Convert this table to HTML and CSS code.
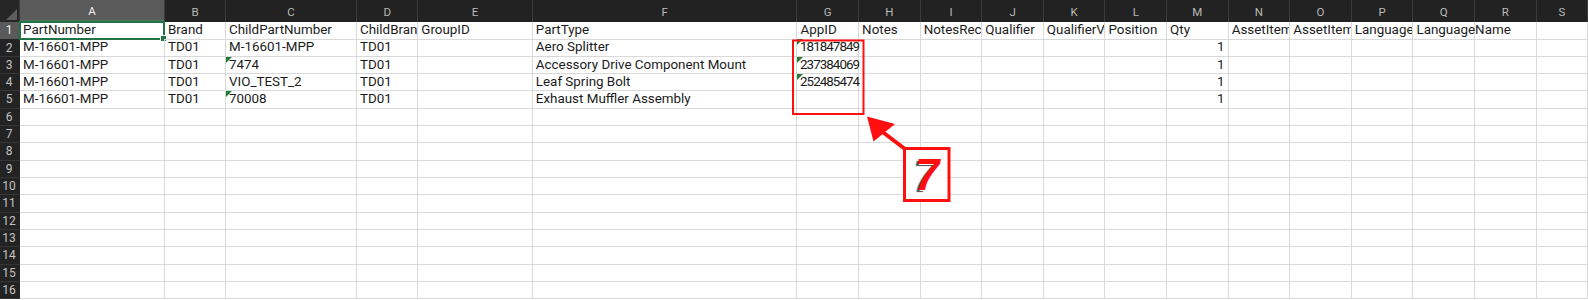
FILE: index.html
```html
<!DOCTYPE html>
<html>
<head>
<meta charset="utf-8">
<link rel="stylesheet" href="styles.css">
</head>
<body>
<div class="sheet">
  <div class="row head">
    <div class="corner"></div>
    <div class="ch active">A</div><div class="ch">B</div><div class="ch">C</div><div class="ch">D</div><div class="ch">E</div><div class="ch">F</div><div class="ch">G</div><div class="ch">H</div><div class="ch">I</div><div class="ch">J</div><div class="ch">K</div><div class="ch">L</div><div class="ch">M</div><div class="ch">N</div><div class="ch">O</div><div class="ch">P</div><div class="ch">Q</div><div class="ch">R</div><div class="ch">S</div>
  </div>
  <div class="row">
    <div class="rh active">1</div>
    <div class="c sel">PartNumber<span class="selbox"></span></div><div class="c">Brand</div><div class="c">ChildPartNumber</div><div class="c">ChildBrand</div><div class="c">GroupID</div><div class="c">PartType</div><div class="c">AppID</div><div class="c">Notes</div><div class="c">NotesRecordID</div><div class="c">Qualifier</div><div class="c">QualifierValue</div><div class="c">Position</div><div class="c">Qty</div><div class="c">AssetItemOrder</div><div class="c">AssetItemRef</div><div class="c">LanguageCode</div><div class="c spill">LanguageName</div><div class="c"></div><div class="c"></div>
  </div>
  <div class="row">
    <div class="rh">2</div>
    <div class="c">M-16601-MPP</div><div class="c">TD01</div><div class="c">M-16601-MPP</div><div class="c">TD01</div><div class="c"></div><div class="c">Aero Splitter</div><div class="c tri digits">181847849</div><div class="c"></div><div class="c"></div><div class="c"></div><div class="c"></div><div class="c"></div><div class="c num">1</div><div class="c"></div><div class="c"></div><div class="c"></div><div class="c"></div><div class="c"></div><div class="c"></div>
  </div>
  <div class="row">
    <div class="rh">3</div>
    <div class="c">M-16601-MPP</div><div class="c">TD01</div><div class="c tri">7474</div><div class="c">TD01</div><div class="c"></div><div class="c">Accessory Drive Component Mount</div><div class="c tri digits">237384069</div><div class="c"></div><div class="c"></div><div class="c"></div><div class="c"></div><div class="c"></div><div class="c num">1</div><div class="c"></div><div class="c"></div><div class="c"></div><div class="c"></div><div class="c"></div><div class="c"></div>
  </div>
  <div class="row">
    <div class="rh">4</div>
    <div class="c">M-16601-MPP</div><div class="c">TD01</div><div class="c">VIO_TEST_2</div><div class="c">TD01</div><div class="c"></div><div class="c">Leaf Spring Bolt</div><div class="c tri digits">252485474</div><div class="c"></div><div class="c"></div><div class="c"></div><div class="c"></div><div class="c"></div><div class="c num">1</div><div class="c"></div><div class="c"></div><div class="c"></div><div class="c"></div><div class="c"></div><div class="c"></div>
  </div>
  <div class="row">
    <div class="rh">5</div>
    <div class="c">M-16601-MPP</div><div class="c">TD01</div><div class="c tri">70008</div><div class="c">TD01</div><div class="c"></div><div class="c">Exhaust Muffler Assembly</div><div class="c"></div><div class="c"></div><div class="c"></div><div class="c"></div><div class="c"></div><div class="c"></div><div class="c num">1</div><div class="c"></div><div class="c"></div><div class="c"></div><div class="c"></div><div class="c"></div><div class="c"></div>
  </div>
  <div class="row"><div class="rh">6</div><div class="c"></div><div class="c"></div><div class="c"></div><div class="c"></div><div class="c"></div><div class="c"></div><div class="c"></div><div class="c"></div><div class="c"></div><div class="c"></div><div class="c"></div><div class="c"></div><div class="c"></div><div class="c"></div><div class="c"></div><div class="c"></div><div class="c"></div><div class="c"></div><div class="c"></div></div>
  <div class="row"><div class="rh">7</div><div class="c"></div><div class="c"></div><div class="c"></div><div class="c"></div><div class="c"></div><div class="c"></div><div class="c"></div><div class="c"></div><div class="c"></div><div class="c"></div><div class="c"></div><div class="c"></div><div class="c"></div><div class="c"></div><div class="c"></div><div class="c"></div><div class="c"></div><div class="c"></div><div class="c"></div></div>
  <div class="row"><div class="rh">8</div><div class="c"></div><div class="c"></div><div class="c"></div><div class="c"></div><div class="c"></div><div class="c"></div><div class="c"></div><div class="c"></div><div class="c"></div><div class="c"></div><div class="c"></div><div class="c"></div><div class="c"></div><div class="c"></div><div class="c"></div><div class="c"></div><div class="c"></div><div class="c"></div><div class="c"></div></div>
  <div class="row"><div class="rh">9</div><div class="c"></div><div class="c"></div><div class="c"></div><div class="c"></div><div class="c"></div><div class="c"></div><div class="c"></div><div class="c"></div><div class="c"></div><div class="c"></div><div class="c"></div><div class="c"></div><div class="c"></div><div class="c"></div><div class="c"></div><div class="c"></div><div class="c"></div><div class="c"></div><div class="c"></div></div>
  <div class="row"><div class="rh">10</div><div class="c"></div><div class="c"></div><div class="c"></div><div class="c"></div><div class="c"></div><div class="c"></div><div class="c"></div><div class="c"></div><div class="c"></div><div class="c"></div><div class="c"></div><div class="c"></div><div class="c"></div><div class="c"></div><div class="c"></div><div class="c"></div><div class="c"></div><div class="c"></div><div class="c"></div></div>
  <div class="row"><div class="rh">11</div><div class="c"></div><div class="c"></div><div class="c"></div><div class="c"></div><div class="c"></div><div class="c"></div><div class="c"></div><div class="c"></div><div class="c"></div><div class="c"></div><div class="c"></div><div class="c"></div><div class="c"></div><div class="c"></div><div class="c"></div><div class="c"></div><div class="c"></div><div class="c"></div><div class="c"></div></div>
  <div class="row"><div class="rh">12</div><div class="c"></div><div class="c"></div><div class="c"></div><div class="c"></div><div class="c"></div><div class="c"></div><div class="c"></div><div class="c"></div><div class="c"></div><div class="c"></div><div class="c"></div><div class="c"></div><div class="c"></div><div class="c"></div><div class="c"></div><div class="c"></div><div class="c"></div><div class="c"></div><div class="c"></div></div>
  <div class="row"><div class="rh">13</div><div class="c"></div><div class="c"></div><div class="c"></div><div class="c"></div><div class="c"></div><div class="c"></div><div class="c"></div><div class="c"></div><div class="c"></div><div class="c"></div><div class="c"></div><div class="c"></div><div class="c"></div><div class="c"></div><div class="c"></div><div class="c"></div><div class="c"></div><div class="c"></div><div class="c"></div></div>
  <div class="row"><div class="rh">14</div><div class="c"></div><div class="c"></div><div class="c"></div><div class="c"></div><div class="c"></div><div class="c"></div><div class="c"></div><div class="c"></div><div class="c"></div><div class="c"></div><div class="c"></div><div class="c"></div><div class="c"></div><div class="c"></div><div class="c"></div><div class="c"></div><div class="c"></div><div class="c"></div><div class="c"></div></div>
  <div class="row"><div class="rh">15</div><div class="c"></div><div class="c"></div><div class="c"></div><div class="c"></div><div class="c"></div><div class="c"></div><div class="c"></div><div class="c"></div><div class="c"></div><div class="c"></div><div class="c"></div><div class="c"></div><div class="c"></div><div class="c"></div><div class="c"></div><div class="c"></div><div class="c"></div><div class="c"></div><div class="c"></div></div>
  <div class="row"><div class="rh">16</div><div class="c"></div><div class="c"></div><div class="c"></div><div class="c"></div><div class="c"></div><div class="c"></div><div class="c"></div><div class="c"></div><div class="c"></div><div class="c"></div><div class="c"></div><div class="c"></div><div class="c"></div><div class="c"></div><div class="c"></div><div class="c"></div><div class="c"></div><div class="c"></div><div class="c"></div></div>

  <svg class="annot" width="1588" height="300" viewBox="0 0 1588 300">
    <rect x="793" y="40.5" width="70.5" height="73.5" fill="none" stroke="#ff1010" stroke-width="2"/>
    <line x1="905" y1="149" x2="880" y2="130" stroke="#ff1010" stroke-width="4"/>
    <polygon points="867,116.5 873.5,141.5 895,124" fill="#ff1010"/>
    <rect x="904.5" y="148.5" width="44.5" height="52" fill="#fff" stroke="#ff1010" stroke-width="3"/>
  </svg>
  <div class="seven">7</div>
</div>
</body>
</html>
```

FILE: styles.css
```css
* { box-sizing: border-box; }
html, body { margin: 0; padding: 0; background: #fff; }
body { width: 1588px; height: 300px; overflow: hidden; }

.sheet {
  position: relative;
  width: 1588px;
  height: 300px;
  font-family: Roboto, "Liberation Sans", sans-serif;
  font-size: 13.4px;
  color: #1b1b1b;
}

.row {
  display: grid;
  grid-template-columns: 20px 145px 61px 131px 61.3px 114.5px 264.7px repeat(12, 61.6px) 1fr;
  height: 17.33px;
}
.row.head { height: 22px; }

.corner {
  background: #262626;
  border-right: 1px solid #3a3a3a;
  position: relative;
}
.corner::after {
  content: "";
  position: absolute;
  right: 2px;
  bottom: 2px;
  width: 0;
  height: 0;
  border-left: 11px solid transparent;
  border-bottom: 11px solid #5e5e5e;
}

.ch {
  background: #222222;
  color: #b9b9b9;
  font-size: 11.5px;
  display: flex;
  align-items: center;
  justify-content: center;
  border-right: 1px solid #3c3c3c;
  padding-top: 2px;
}
.ch.active {
  background: #5a5a5a;
  color: #eeeeee;
  border-bottom: 2px solid #4a7a5e;
}

.rh {
  background: #232323;
  color: #c4c4c4;
  font-size: 12px;
  display: flex;
  align-items: center;
  justify-content: center;
  border-bottom: 1px solid #353535;
  padding-right: 2px;
}
.rh.active {
  background: #5a5a5a;
  color: #eeeeee;
}

.c {
  border-right: 1px solid #d9d9d9;
  border-bottom: 1px solid #d9d9d9;
  white-space: nowrap;
  overflow: hidden;
  padding: 0 3px;
  line-height: 16.5px;
  position: relative;
}
.c.num { text-align: right; }
.c.digits {
  letter-spacing: -0.95px;
  padding-left: 2.5px;
  overflow: visible;
}
.c.spill { overflow: visible; z-index: 1; }

.c.tri::before {
  content: "";
  position: absolute;
  left: 0;
  top: 0;
  width: 0;
  height: 0;
  border-top: 6px solid #1f7a36;
  border-right: 6px solid transparent;
}

.c.sel { overflow: visible; }
.selbox {
  position: absolute;
  left: -1px;
  top: -1px;
  right: -1px;
  bottom: -1px;
  border: 2px solid #217346;
  pointer-events: none;
}
.selbox::after {
  content: "";
  position: absolute;
  right: -4px;
  bottom: -4px;
  width: 5px;
  height: 5px;
  background: #217346;
  border: 1px solid #fff;
}

.annot {
  position: absolute;
  left: 0;
  top: 0;
  pointer-events: none;
}

.seven {
  position: absolute;
  left: 906px;
  top: 150px;
  width: 42px;
  height: 49px;
  display: flex;
  align-items: center;
  justify-content: center;
  font-family: "Liberation Sans", sans-serif;
  font-weight: bold;
  font-style: italic;
  font-size: 44px;
  line-height: 1;
  color: #ff1010;
  text-shadow: 1px 1px 0 #fff, -2px 2px 1px #4a4a4a;
}
```
